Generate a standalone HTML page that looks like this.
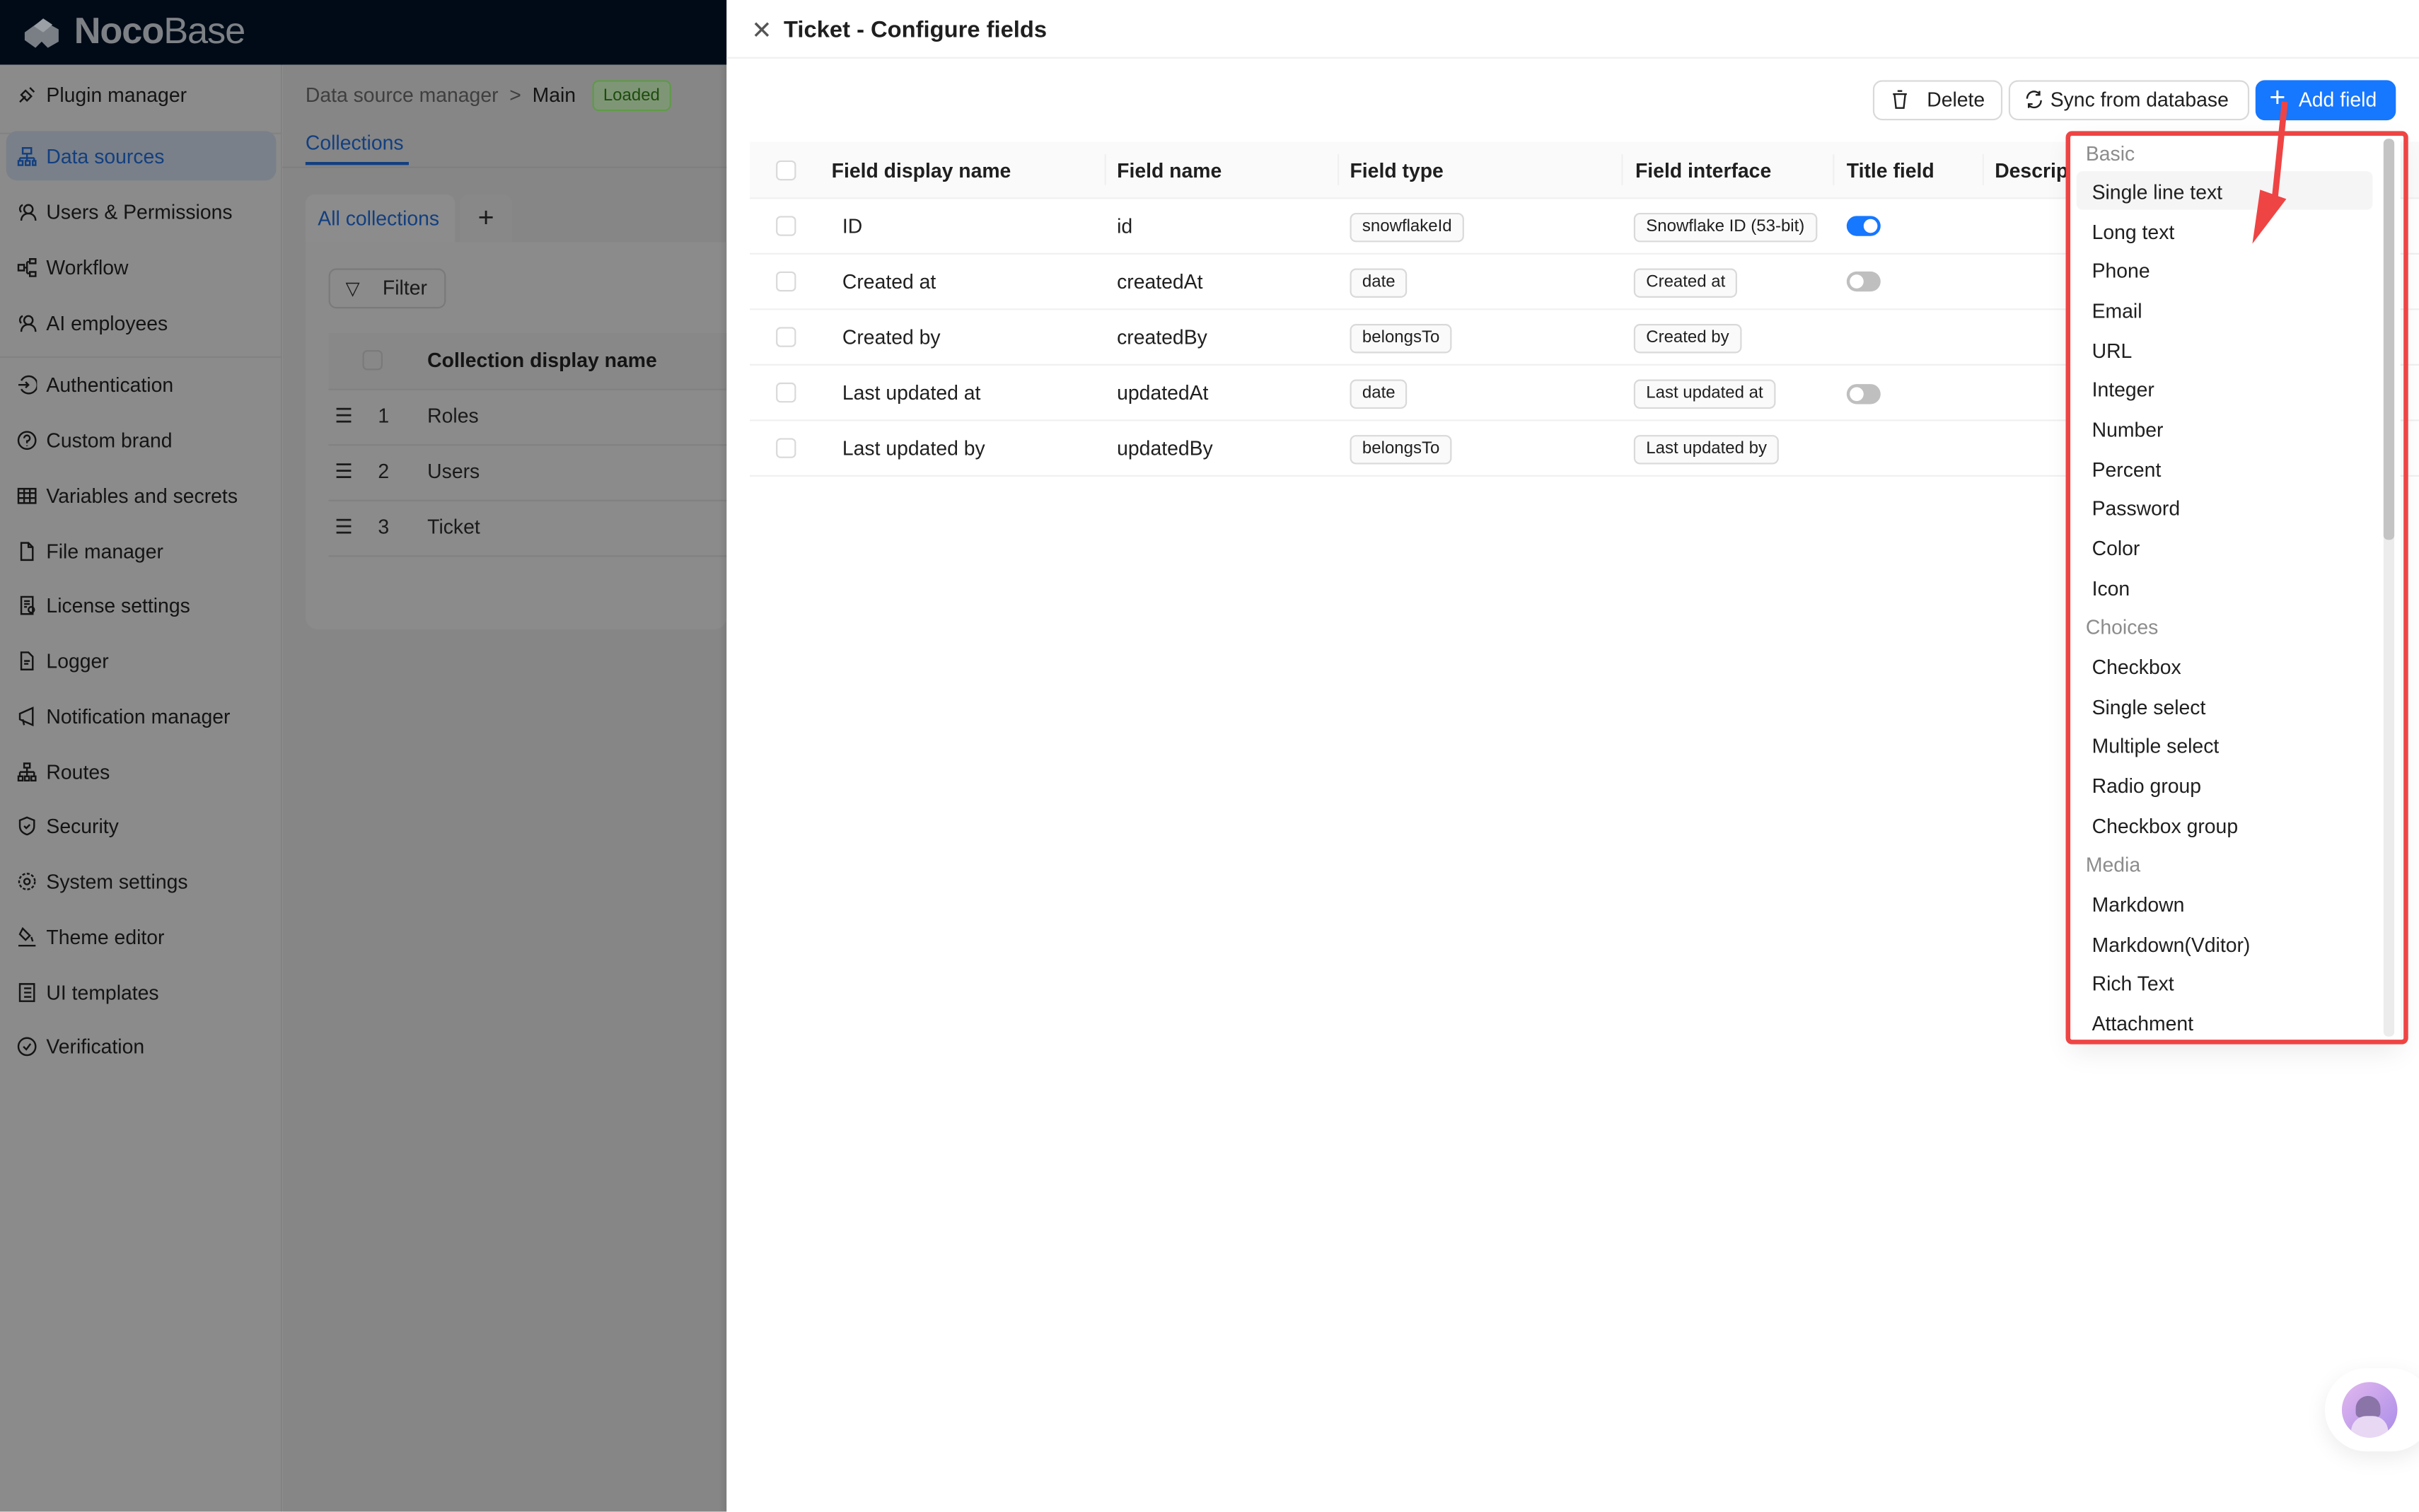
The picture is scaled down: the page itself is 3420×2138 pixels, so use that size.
<!DOCTYPE html>
<html><head><meta charset="utf-8"><style>
*{box-sizing:border-box;margin:0;padding:0}
html,body{width:3420px;height:2138px;overflow:hidden;background:#fff}
#w{position:absolute;left:0;top:0;width:1568px;height:980px;transform:scale(2.18112);transform-origin:0 0;font-family:"Liberation Sans",sans-serif;font-size:13px;color:#1f1f1f}
.a{position:absolute}
.hdr{left:0;top:0;width:471px;height:42px;background:#000b17}
.side{left:0;top:42px;width:183px;height:938px;background:#8b8b8b;border-right:1px solid #838383}
.main{left:183px;top:42px;width:288px;height:938px;background:#868686}
.mi{position:absolute;left:11px;font-size:13px;color:#141414;display:flex;align-items:center;gap:6px;margin-top:1px}
.mi svg{width:13px;height:13px;stroke:#141414;fill:none;stroke-width:1.2}
.drw{left:471px;top:0;width:1097px;height:980px;background:#fff}
.th{position:absolute;font-weight:bold;font-size:13px;color:#1f1f1f}
.td{position:absolute;font-size:13px;color:#1f1f1f}
.tag{position:absolute;font-size:11px;border:1px solid #d9d9d9;background:#fafafa;border-radius:4px;padding:0 7px;height:19px;line-height:17px;color:#1f1f1f}
.td,.th,.tag,.cb,.it,.gr{margin-top:1px}
.cb{position:absolute;left:503px;width:13px;height:13px;border:1px solid #d9d9d9;border-radius:3px;background:#fff}
.row{position:absolute;left:486px;width:1082px;height:1px;background:#f0f0f0}
.dd{left:1342px;top:86px;width:214px;height:590px;background:#fff;box-shadow:0 6px 16px rgba(0,0,0,.08)}
.it{position:absolute;left:14px;font-size:13px;color:#1f1f1f}
.gr{position:absolute;left:10px;font-size:13px;color:#8c8c8c}
.btn{position:absolute;top:52px;height:26px;border:1px solid #d9d9d9;border-radius:6px;background:#fff;font-size:13px;line-height:24px;color:#1f1f1f}
</style></head><body><div id="w">
<div class="a hdr"></div>
<div class="a" style="left:14px;top:9px;width:28px;height:24px">
<svg width="28" height="24" viewBox="0 0 28 24"><path d="M2 12 L13 4 L24 10 L24 18 L17 22 L13 18 L9 22 L2 17Z" fill="#7a7f86"/><path d="M8 8 L14 3 L20 7 L14 12Z" fill="#9aa0a6"/></svg></div>
<div class="a" style="left:48px;top:7px;font-size:24px;color:#7d8186;letter-spacing:-0.5px"><b>Noco</b><span style="font-weight:300">Base</span></div>
<div class="a side">
<div style="position:absolute;left:0;top:44px;width:183px;height:1px;background:#828282"></div>
<div style="position:absolute;left:4px;top:43px;width:175px;height:32px;background:#7a8089;border-radius:7px"></div>
<div style="position:absolute;left:0;top:189px;width:183px;height:1px;background:#828282"></div>
</div>
<div class="mi" style="top:53px"><svg viewBox="0 0 14 14"><path d="M2 12l4-4M6 4l4 4-3 3-4-4zM9 2l3 3"/></svg>Plugin manager</div>
<div class="mi" style="top:93px;color:#123f80"><svg viewBox="0 0 14 14" style="stroke:#123f80"><path d="M4 1h6v4H4zM7 5v3M2 8h10M2 8v2M7 8v2M12 8v2M1 10h3v3H1zM6 10h3v3H6zM11 10h2v3h-2z"/></svg>Data sources</div>
<div class="mi" style="top:129px"><svg viewBox="0 0 14 14"><circle cx="8" cy="5" r="3"/><path d="M3 13c0-3 2-5 5-5s5 2 5 5M4 2a3 3 0 0 0-1 5"/></svg>Users &amp; Permissions</div>
<div class="mi" style="top:165px"><svg viewBox="0 0 14 14"><path d="M1 5h4v4H1zM9 1h4v3H9zM9 10h4v3H9zM5 7h2M7 3v8M7 3h2M7 11h2"/></svg>Workflow</div>
<div class="mi" style="top:201px"><svg viewBox="0 0 14 14"><circle cx="8" cy="5" r="3"/><path d="M3 13c0-3 2-5 5-5s5 2 5 5M4 2a3 3 0 0 0-1 5"/></svg>AI employees</div>
<div class="mi" style="top:241px"><svg viewBox="0 0 14 14"><path d="M3 4a6 6 0 1 1 0 6M1 7h7M6 5l2 2-2 2"/></svg>Authentication</div>
<div class="mi" style="top:277px"><svg viewBox="0 0 14 14"><circle cx="7" cy="7" r="6"/><path d="M5 5.5a2 2 0 1 1 2 2v1.5M7 10.5v.5"/></svg>Custom brand</div>
<div class="mi" style="top:313px"><svg viewBox="0 0 14 14"><path d="M1 2h12v10H1zM1 5h12M1 8.5h12M5 2v10M9 2v10"/></svg>Variables and secrets</div>
<div class="mi" style="top:349px"><svg viewBox="0 0 14 14"><path d="M3 1h5l3 3v9H3zM8 1v3h3"/></svg>File manager</div>
<div class="mi" style="top:384px"><svg viewBox="0 0 14 14"><path d="M3 1h8v12H3zM5 4h4M5 6h4M5 8h2"/><circle cx="10" cy="10" r="2"/></svg>License settings</div>
<div class="mi" style="top:420px"><svg viewBox="0 0 14 14"><path d="M3 1h5l3 3v9H3zM5 7h4M5 9h3"/></svg>Logger</div>
<div class="mi" style="top:456px"><svg viewBox="0 0 14 14"><path d="M2 5v4l9 4V1zM4 9l1 4"/></svg>Notification manager</div>
<div class="mi" style="top:492px"><svg viewBox="0 0 14 14"><path d="M5 1h4v3H5zM7 4v3M2 7h10M2 7v3M12 7v3M1 10h3v3H1zM10 10h3v3h-3zM7 7v3M5.5 10h3v3h-3z"/></svg>Routes</div>
<div class="mi" style="top:527px"><svg viewBox="0 0 14 14"><path d="M7 1l5 2v4c0 3-2 5-5 6-3-1-5-3-5-6V3zM5 7l1.5 1.5L9 6"/></svg>Security</div>
<div class="mi" style="top:563px"><svg viewBox="0 0 14 14"><circle cx="7" cy="7" r="2"/><circle cx="7" cy="7" r="5.5" stroke-dasharray="2 1.2"/></svg>System settings</div>
<div class="mi" style="top:599px"><svg viewBox="0 0 14 14"><path d="M4 1l5 5-3 3-4-4zM10 7l1 3M1 13h12"/></svg>Theme editor</div>
<div class="mi" style="top:635px"><svg viewBox="0 0 14 14"><path d="M2 1h10v12H2zM5 4h5M5 7h5M5 10h5"/></svg>UI templates</div>
<div class="mi" style="top:670px"><svg viewBox="0 0 14 14"><circle cx="7" cy="7" r="6"/><path d="M4.5 7l2 2 3-4"/></svg>Verification</div>
<div class="a main"></div>
<div class="a" style="left:198px;top:54px;font-size:13px;color:#3f3f3f">Data source manager&nbsp;&nbsp;&gt;&nbsp;&nbsp;<span style="color:#141414">Main</span></div>
<div class="a" style="left:384px;top:52px;height:20px;padding:0 6px;border:1px solid #5f9a48;background:#7e9676;border-radius:4px;font-size:11px;line-height:18px;color:#1d4d0c">Loaded</div>
<div class="a" style="left:183px;top:108px;width:288px;height:1px;background:#7f7f7f"></div>
<div class="a" style="left:198px;top:85px;color:#123f80">Collections</div>
<div class="a" style="left:198px;top:105px;width:67px;height:2px;background:#123f80"></div>
<div class="a" style="left:198px;top:126px;width:97px;height:31px;background:#8c8c8c;border-radius:6px 6px 0 0"></div>
<div class="a" style="left:206px;top:134px;color:#123f80">All collections</div>
<div class="a" style="left:298px;top:126px;width:34px;height:31px;background:#888;border-radius:6px 6px 0 0;text-align:center;font-size:18px;line-height:30px;color:#1a1a1a">+</div>
<div class="a" style="left:198px;top:157px;width:273px;height:251px;background:#8b8b8b;border-radius:0 0 8px 8px"></div>
<div class="a" style="left:213px;top:174px;width:76px;height:26px;border:1px solid #7a7a7a;border-radius:5px;font-size:13px;line-height:24px;padding-left:34px;color:#1a1a1a">Filter</div>
<div class="a" style="left:224px;top:180px;font-size:12px;color:#1a1a1a">▽</div>
<div class="a" style="left:213px;top:216px;width:258px;height:36px;background:#888"></div>
<div class="a" style="left:235px;top:227px;width:13px;height:13px;border:1px solid #7a7a7a;border-radius:3px"></div>
<div class="a" style="left:277px;top:226px;font-weight:bold;color:#141414">Collection display name</div>
<div class="a" style="left:213px;top:252px;width:258px;height:1px;background:#818181"></div>
<div class="a" style="left:213px;top:288px;width:258px;height:1px;background:#818181"></div>
<div class="a" style="left:213px;top:324px;width:258px;height:1px;background:#818181"></div>
<div class="a" style="left:213px;top:360px;width:258px;height:1px;background:#818181"></div>
<div class="a" style="left:217px;top:262px;color:#1a1a1a">☰</div><div class="a" style="left:245px;top:262px;color:#1a1a1a">1</div><div class="a" style="left:277px;top:262px;color:#1a1a1a">Roles</div>
<div class="a" style="left:217px;top:298px;color:#1a1a1a">☰</div><div class="a" style="left:245px;top:298px;color:#1a1a1a">2</div><div class="a" style="left:277px;top:298px;color:#1a1a1a">Users</div>
<div class="a" style="left:217px;top:334px;color:#1a1a1a">☰</div><div class="a" style="left:245px;top:334px;color:#1a1a1a">3</div><div class="a" style="left:277px;top:334px;color:#1a1a1a">Ticket</div>
<div class="a" style="left:466px;top:42px;width:5px;height:938px;background:linear-gradient(90deg,rgba(0,0,0,0),rgba(0,0,0,.08))"></div>

<div class="a drw"></div>
<div class="a" style="left:471px;top:37px;width:1097px;height:1px;background:#f0f0f0"></div>
<div class="a" style="left:487px;top:10px;font-size:16px;color:#555">✕</div>
<div class="a" style="left:508px;top:11px;font-size:15px;font-weight:bold;color:#1f1f1f">Ticket - Configure fields</div>
<div class="btn" style="left:1214px;width:84px;padding-left:34px">Delete</div>
<svg class="a" style="left:1226px;top:58px" width="11" height="13" viewBox="0 0 11 13"><path d="M1 3h9M4 1h3M2 3l1 9h5l1-9" fill="none" stroke="#1f1f1f" stroke-width="1.1"/></svg>
<div class="btn" style="left:1302px;width:156px;padding-left:26px">Sync from database</div>
<svg class="a" style="left:1312px;top:58px" width="13" height="13" viewBox="0 0 13 13"><path d="M2 6a4.5 4.5 0 0 1 8-3M11 7a4.5 4.5 0 0 1-8 3M10 1v2.5H7.5M3 12V9.5h2.5" fill="none" stroke="#1f1f1f" stroke-width="1.1"/></svg>
<div class="btn" style="left:1462px;width:91px;background:#1677ff;border-color:#1677ff;color:#fff;padding-left:27px">Add field</div>
<div class="a" style="left:1471px;top:53px;color:#fff;font-size:18px">+</div>

<div class="a" style="left:486px;top:92px;width:1082px;height:36px;background:#fafafa"></div>
<div class="row" style="top:128px"></div><div class="row" style="top:164px"></div><div class="row" style="top:200px"></div><div class="row" style="top:236px"></div><div class="row" style="top:272px"></div><div class="row" style="top:308px"></div>
<div class="a" style="left:716px;top:100px;width:1px;height:20px;background:#f0f0f0"></div>
<div class="a" style="left:867px;top:100px;width:1px;height:20px;background:#f0f0f0"></div>
<div class="a" style="left:1051px;top:100px;width:1px;height:20px;background:#f0f0f0"></div>
<div class="a" style="left:1188px;top:100px;width:1px;height:20px;background:#f0f0f0"></div>
<div class="a" style="left:1285px;top:100px;width:1px;height:20px;background:#f0f0f0"></div>
<div class="cb" style="top:103px"></div>
<div class="th" style="left:539px;top:102px">Field display name</div>
<div class="th" style="left:724px;top:102px">Field name</div>
<div class="th" style="left:875px;top:102px">Field type</div>
<div class="th" style="left:1060px;top:102px">Field interface</div>
<div class="th" style="left:1197px;top:102px">Title field</div>
<div class="th" style="left:1293px;top:102px">Descrip</div>

<div class="cb" style="top:139px"></div><div class="td" style="left:546px;top:138px">ID</div><div class="td" style="left:724px;top:138px">id</div><div class="tag" style="left:875px;top:137px">snowflakeId</div><div class="tag" style="left:1059px;top:137px">Snowflake ID (53-bit)</div>
<div class="a" style="left:1197px;top:140px;width:22px;height:13px;border-radius:7px;background:#1677ff"></div><div class="a" style="left:1208px;top:142px;width:9px;height:9px;border-radius:50%;background:#fff"></div>
<div class="cb" style="top:175px"></div><div class="td" style="left:546px;top:174px">Created at</div><div class="td" style="left:724px;top:174px">createdAt</div><div class="tag" style="left:875px;top:173px">date</div><div class="tag" style="left:1059px;top:173px">Created at</div>
<div class="a" style="left:1197px;top:176px;width:22px;height:13px;border-radius:7px;background:#bfbfbf"></div><div class="a" style="left:1199px;top:178px;width:9px;height:9px;border-radius:50%;background:#fff"></div>
<div class="cb" style="top:211px"></div><div class="td" style="left:546px;top:210px">Created by</div><div class="td" style="left:724px;top:210px">createdBy</div><div class="tag" style="left:875px;top:209px">belongsTo</div><div class="tag" style="left:1059px;top:209px">Created by</div>
<div class="cb" style="top:247px"></div><div class="td" style="left:546px;top:246px">Last updated at</div><div class="td" style="left:724px;top:246px">updatedAt</div><div class="tag" style="left:875px;top:245px">date</div><div class="tag" style="left:1059px;top:245px">Last updated at</div>
<div class="a" style="left:1197px;top:249px;width:22px;height:13px;border-radius:7px;background:#bfbfbf"></div><div class="a" style="left:1199px;top:251px;width:9px;height:9px;border-radius:50%;background:#fff"></div>
<div class="cb" style="top:283px"></div><div class="td" style="left:546px;top:282px">Last updated by</div><div class="td" style="left:724px;top:282px">updatedBy</div><div class="tag" style="left:875px;top:281px">belongsTo</div><div class="tag" style="left:1059px;top:281px">Last updated by</div>

<div class="a dd">
<div style="position:absolute;left:4px;top:25px;width:192px;height:25px;background:#f5f5f5;border-radius:4px"></div>
<div style="position:absolute;left:203px;top:4px;width:7px;height:582px;background:#ececec;border-radius:3px"></div>
<div style="position:absolute;left:203px;top:4px;width:7px;height:260px;background:#c4c4c4;border-radius:3px"></div>
<div class="gr" style="top:5px">Basic</div>
<div class="it" style="top:30px">Single line text</div>
<div class="it" style="top:56px">Long text</div>
<div class="it" style="top:81px">Phone</div>
<div class="it" style="top:107px">Email</div>
<div class="it" style="top:133px">URL</div>
<div class="it" style="top:158px">Integer</div>
<div class="it" style="top:184px">Number</div>
<div class="it" style="top:210px">Percent</div>
<div class="it" style="top:235px">Password</div>
<div class="it" style="top:261px">Color</div>
<div class="it" style="top:287px">Icon</div>
<div class="gr" style="top:312px">Choices</div>
<div class="it" style="top:338px">Checkbox</div>
<div class="it" style="top:364px">Single select</div>
<div class="it" style="top:389px">Multiple select</div>
<div class="it" style="top:415px">Radio group</div>
<div class="it" style="top:441px">Checkbox group</div>
<div class="gr" style="top:466px">Media</div>
<div class="it" style="top:492px">Markdown</div>
<div class="it" style="top:518px">Markdown(Vditor)</div>
<div class="it" style="top:543px">Rich Text</div>
<div class="it" style="top:569px">Attachment</div>
</div>
<div class="a" style="left:1339px;top:85px;width:222px;height:592px;border:3px solid #ef4444;border-radius:4px"></div>
<svg class="a" style="left:1448px;top:64px" width="40" height="100" viewBox="0 0 40 100"><path d="M33 2 L26 70" stroke="#ef4444" stroke-width="4" fill="none"/><path d="M17 59 L12 94 L34 65 Z" fill="#ef4444"/></svg>

<div class="a" style="left:1507px;top:887px;width:70px;height:54px;border-radius:27px;background:#fff;box-shadow:0 4px 14px rgba(0,0,0,.08)"></div>
<div class="a" style="left:1518px;top:896px;width:36px;height:36px;border-radius:50%;background:linear-gradient(135deg,#e2b8ee,#a98ce8);overflow:hidden">
<div style="position:absolute;left:9px;top:9px;width:16px;height:14px;border-radius:8px 8px 3px 3px;background:#8a74a8"></div>
<div style="position:absolute;left:6px;top:22px;width:24px;height:16px;border-radius:10px 10px 0 0;background:#e8d8f4"></div>
</div>
</div></body></html>
